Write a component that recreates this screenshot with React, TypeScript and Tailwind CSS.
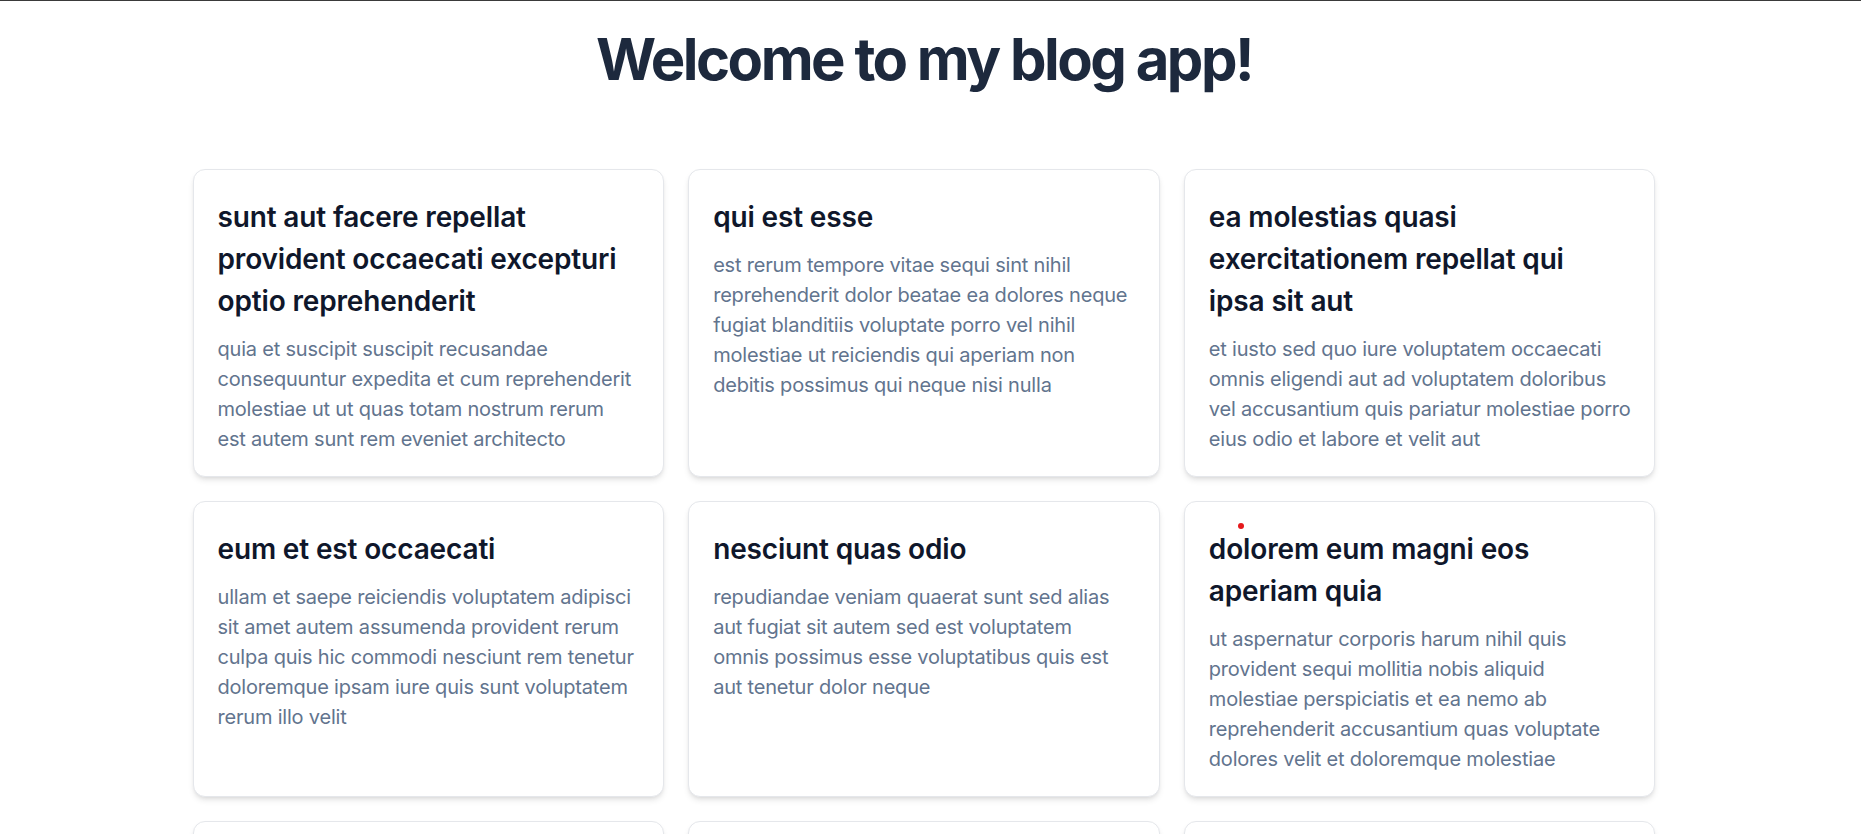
import React from "react";

type Post = { id: number; title: string[]; body: string[] };

const posts: Post[] = [
  {
    id: 1,
    title: ["sunt aut facere repellat", "provident occaecati excepturi", "optio reprehenderit"],
    body: [
      "quia et suscipit suscipit recusandae",
      "consequuntur expedita et cum reprehenderit",
      "molestiae ut ut quas totam nostrum rerum",
      "est autem sunt rem eveniet architecto",
    ],
  },
  {
    id: 2,
    title: ["qui est esse"],
    body: [
      "est rerum tempore vitae sequi sint nihil",
      "reprehenderit dolor beatae ea dolores neque",
      "fugiat blanditiis voluptate porro vel nihil",
      "molestiae ut reiciendis qui aperiam non",
      "debitis possimus qui neque nisi nulla",
    ],
  },
  {
    id: 3,
    title: ["ea molestias quasi", "exercitationem repellat qui", "ipsa sit aut"],
    body: [
      "et iusto sed quo iure voluptatem occaecati",
      "omnis eligendi aut ad voluptatem doloribus",
      "vel accusantium quis pariatur molestiae porro",
      "eius odio et labore et velit aut",
    ],
  },
  {
    id: 4,
    title: ["eum et est occaecati"],
    body: [
      "ullam et saepe reiciendis voluptatem adipisci",
      "sit amet autem assumenda provident rerum",
      "culpa quis hic commodi nesciunt rem tenetur",
      "doloremque ipsam iure quis sunt voluptatem",
      "rerum illo velit",
    ],
  },
  {
    id: 5,
    title: ["nesciunt quas odio"],
    body: [
      "repudiandae veniam quaerat sunt sed alias",
      "aut fugiat sit autem sed est voluptatem",
      "omnis possimus esse voluptatibus quis est",
      "aut tenetur dolor neque",
    ],
  },
  {
    id: 6,
    title: ["dolorem eum magni eos", "aperiam quia"],
    body: [
      "ut aspernatur corporis harum nihil quis",
      "provident sequi mollitia nobis aliquid",
      "molestiae perspiciatis et ea nemo ab",
      "reprehenderit accusantium quas voluptate",
      "dolores velit et doloremque molestiae",
    ],
  },
  {
    id: 7,
    title: ["magnam facilis autem"],
    body: [
      "dolore placeat quibusdam ea quo vitae",
      "magni quis enim qui quis quo nemo aut saepe",
      "quidem repellat excepturi ut quia",
      "sunt ut sequi eos ea sed quas",
    ],
  },
  {
    id: 8,
    title: ["dolorem dolore est ipsam"],
    body: [
      "dignissimos aperiam dolorem qui eum",
      "facilis quibusdam animi sint suscipit qui",
      "sint possimus cum quaerat magni maiores",
      "excepturi ipsam ut commodi dolor",
      "voluptatum modi aut vitae",
    ],
  },
  {
    id: 9,
    title: ["nesciunt iure omnis dolorem", "tempora et accusantium"],
    body: [
      "consectetur animi nesciunt iure dolore",
      "enim quia ad veniam autem ut quam aut",
      "nobis et est aut quod aut provident",
      "voluptas autem voluptas",
    ],
  },
];

function Card({ post }: { post: Post }) {
  return (
    <div className="relative rounded-xl border border-gray-200 bg-white px-6 pb-[22px] pt-[26px] shadow-md">
      {post.id === 6 && (
        <span className="absolute left-[53px] top-[21px] h-[6px] w-[6px] rounded-full bg-[#e5191c]" />
      )}
      <h2 className="text-[28px] font-semibold leading-[42px] tracking-[-0.15px] text-slate-900">
        {post.title.map((l, i) => (
          <span key={i} className="block whitespace-nowrap">
            {l}
          </span>
        ))}
      </h2>
      <p className="mt-3 text-[20px] leading-[30px] tracking-[-0.2px] text-slate-500">
        {post.body.map((l, i) => (
          <span key={i} className="block whitespace-nowrap">
            {l}
          </span>
        ))}
      </p>
    </div>
  );
}

export default function App() {
  return (
    <div className="min-h-screen border-t border-[#3a3a3a] bg-white pr-[13px] font-['Inter',_'Noto_Sans',_sans-serif]">
      <h1 className="pt-[29px] text-center text-[58px] font-bold leading-none tracking-[-2.5px] text-slate-800">
        Welcome to my blog app!
      </h1>
      <main className="mx-auto mt-[81px] grid max-w-[1463px] grid-cols-3 gap-6 pb-10">
        {posts.map((p) => (
          <Card key={p.id} post={p} />
        ))}
      </main>
    </div>
  );
}
